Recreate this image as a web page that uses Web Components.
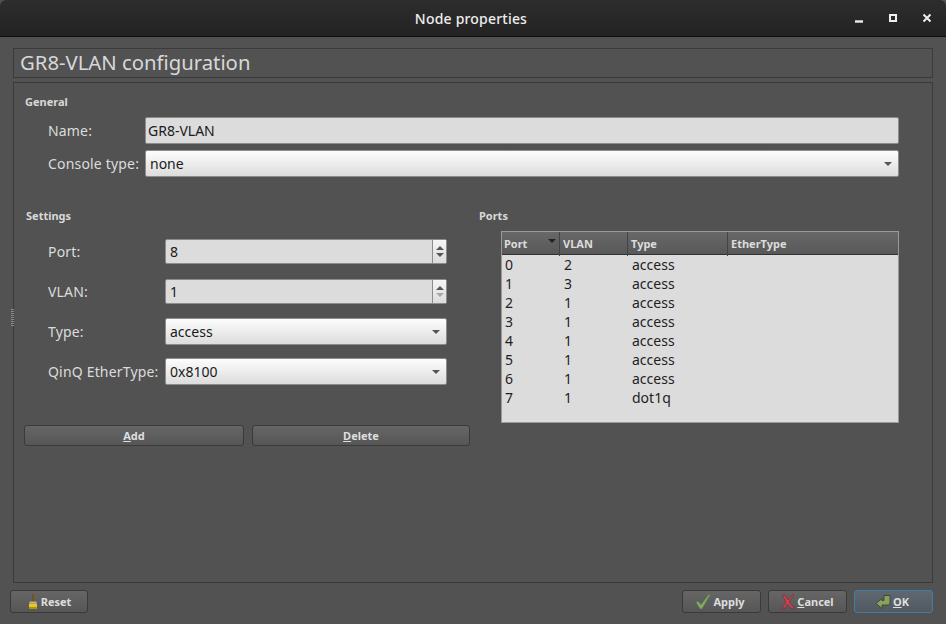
<!DOCTYPE html>
<html>
<head>
<meta charset="utf-8">
<title>Node properties</title>
<style>
  html, body { margin: 0; height: 100%; background: #525252; }
  body { font: 14px "Noto Sans", sans-serif; color: #e6e6e6; overflow: hidden; }
</style>
</head>
<body>
<node-dialog>
  <span slot="title">Node properties</span>
  <span slot="heading">GR8-VLAN configuration</span>

  <group-title style="margin:11px 0 0 1px">General</group-title>
  <form-row label="Name:" label-width="97" style="margin:7px 0 0 24px;width:851px"><text-field value="GR8-VLAN"></text-field></form-row>
  <form-row label="Console type:" label-width="97" style="margin:6px 0 0 24px;width:851px"><combo-box value="none"></combo-box></form-row>

  <two-columns>
    <div slot="left">
      <group-title style="margin-left:2px">Settings</group-title>
      <form-row label="Port:" label-width="117" style="margin:15px 0 0 24px;width:399px"><spin-box value="8"></spin-box></form-row>
      <form-row label="VLAN:" label-width="117" style="margin:15px 0 0 24px;width:399px"><spin-box value="1" at-min></spin-box></form-row>
      <form-row label="Type:" label-width="117" style="margin:14px 0 0 24px;width:399px"><combo-box value="access"></combo-box></form-row>
      <form-row label="QinQ EtherType:" label-width="117" style="margin:13px 0 0 24px;width:399px"><combo-box value="0x8100"></combo-box></form-row>
      <action-row>
        <qt-button flat-height style="width:220px"><u>A</u>dd</qt-button>
        <qt-button flat-height style="width:218px"><u>D</u>elete</qt-button>
      </action-row>
    </div>
    <div slot="right">
      <group-title>Ports</group-title>
      <port-table></port-table>
    </div>
  </two-columns>

  <qt-button slot="reset" style="width:78px"><svg slot="icon" width="12" height="17" viewBox="0 0 12 17"><path d="M5 1h2v8H5z" fill="#7a4f1e"/><path d="M2.500 8.500h7v2h-7z" fill="#b9b2a0"/><path d="M2 10.500h8V16H2z" fill="#e6c81e"/><path d="M2 14h8v2H2z" fill="#a98f14"/></svg>Reset</qt-button>
  <qt-button slot="actions" style="width:79px;padding-right:3px"><svg slot="icon" width="16" height="17" viewBox="0 0 16 17"><path d="M1 9.500l2-1.500 3 3.500L14 1l1.500.5L7 16H5z" fill="#86a868" stroke="#56703f" stroke-width=".7"/></svg>Apply</qt-button>
  <qt-button slot="actions" style="width:79px"><svg slot="icon" width="14" height="17" viewBox="0 0 14 17"><path d="M1 2h3l3 5 4.500-5.500L13 2 8 9l5 6-2 1-4.500-5L3 16H1l4-7z" fill="#cc4452" stroke="#7d2a32" stroke-width=".7"/></svg><u>C</u>ancel</qt-button>
  <qt-button slot="actions" default style="width:79px;padding-right:3px"><svg slot="icon" width="16" height="17" viewBox="0 0 16 17"><path d="M1 10.500l6-5v2h2V2.500h6v7.500q0 2-2 2H7v3.500z" fill="#8d9e62" stroke="#3c4628" stroke-width=".9"/></svg><u>O</u>K</qt-button>
</node-dialog>

<script>
class NodeDialog extends HTMLElement {
  connectedCallback() {
    this.attachShadow({ mode: 'open' });
    this.shadowRoot.innerHTML = `
      <style>
        :host { display: flex; flex-direction: column; width: 946px; height: 624px; position: relative; background: #525252; }
        .titlebar { height: 36px; flex: none; display: grid; grid-template-columns: 1fr auto 1fr; align-items: center;
          background: linear-gradient(#2d2d2d, #232323); border-bottom: 1px solid #0f0f0f; border-radius: 6px 6px 0 0; }
        .titlebar .name { grid-column: 2; font-weight: 500; font-size: 14px; letter-spacing: .2px; color: #eee; padding-right: 4px; }
        .controls { grid-column: 3; justify-self: end; display: flex; gap: 20px; padding-right: 12px; }
        .controls svg { display: block; }
        .content { flex: 1; display: flex; flex-direction: column; padding: 11px 13px 11px 13px; min-height: 0; }
        .heading { height: 28px; flex: none; border: 1px solid #3b3b3b; padding-left: 6px;
          font-size: 20.3px; line-height: 27px; color: #d8d8d8; }
        .frame { flex: 1; margin-top: 4px; border: 1px solid #3b3b3b; padding-left: 10px; min-height: 0; }
        .footer { display: flex; justify-content: space-between; flex: none; margin: 7px 0 0 -3px; height: 23px; }
        .footer .right { display: flex; }
        .right ::slotted(*) { margin-left: 7px; }
        .grip { position: absolute; left: 11px; top: 309px; width: 3px; height: 17px;
          background: repeating-linear-gradient(#8a8a8a 0 1px, transparent 1px 2px); }
      </style>
      <div class="titlebar">
        <span class="name"><slot name="title"></slot></span>
        <div class="controls">
          <svg width="14" height="14" viewBox="0 0 14 14"><path d="M3 9.300h8v2.400H3z" fill="#eee"/></svg>
          <svg width="14" height="14" viewBox="0 0 14 14"><path d="M4 4h6v6H4z" fill="none" stroke="#eee" stroke-width="2"/></svg>
          <svg width="14" height="14" viewBox="0 0 14 14"><path d="M3.500 3.500l7 7M10.500 3.500l-7 7" fill="none" stroke="#eee" stroke-width="2"/></svg>
        </div>
      </div>
      <div class="content">
        <div class="heading"><slot name="heading"></slot></div>
        <div class="frame"><slot></slot></div>
        <div class="footer">
          <slot name="reset"></slot>
          <div class="right"><slot name="actions"></slot></div>
        </div>
      </div>
      <div class="grip"></div>
    `;
  }
}

class GroupTitle extends HTMLElement {
  connectedCallback() {
    this.attachShadow({ mode: 'open' });
    this.shadowRoot.innerHTML = `
      <style>
        :host { display: block; font-size: 11px; font-weight: 700; line-height: 16px; color: #d9d9d9; }
      </style>
      <slot></slot>
    `;
  }
}

class FormRow extends HTMLElement {
  connectedCallback() {
    this.attachShadow({ mode: 'open' });
    const w = this.getAttribute('label-width');
    this.shadowRoot.innerHTML = `
      <style>
        :host { display: grid; align-items: center; grid-template-columns: ${w}px 1fr; }
        .label { color: #dcdcdc; white-space: nowrap; letter-spacing: .18px; }
      </style>
      <span class="label">${this.getAttribute('label')}</span>
      <slot></slot>
    `;
  }
}

class TextField extends HTMLElement {
  connectedCallback() {
    this.attachShadow({ mode: 'open' });
    this.shadowRoot.innerHTML = `
      <style>
        :host { display: block; height: 27px; box-sizing: border-box; border: 1px solid #8c8c8c; border-radius: 2px;
          background: #dcdcdc; color: #1a1a1a; padding-left: 2px; line-height: 25px; }
      </style>
      ${this.getAttribute('value')}
    `;
  }
}

class ComboBox extends HTMLElement {
  connectedCallback() {
    this.attachShadow({ mode: 'open' });
    this.shadowRoot.innerHTML = `
      <style>
        :host { display: flex; justify-content: space-between; align-items: center; height: 27px; box-sizing: border-box;
          border: 1px solid #8c8c8c; border-radius: 2px; background: linear-gradient(#fdfdfd, #dcdcdc);
          color: #1a1a1a; padding: 0 7px 0 4px; }
        i { width: 0; height: 0; border: 4px solid transparent; border-top: 4px solid #555; border-bottom: 0; margin-right: -1px; }
      </style>
      <span>${this.getAttribute('value')}</span><i></i>
    `;
  }
}

class SpinBox extends HTMLElement {
  connectedCallback() {
    this.attachShadow({ mode: 'open' });
    const down = this.hasAttribute('at-min') ? '#a8a8a8' : '#555';
    this.shadowRoot.innerHTML = `
      <style>
        :host { display: flex; height: 25px; box-sizing: border-box; border: 1px solid #8c8c8c; border-radius: 2px;
          background: #dcdcdc; color: #1a1a1a; line-height: 23px; }
        .value { flex: 1; padding-left: 4px; }
        .arrows { width: 13px; border-left: 1px solid #8c8c8c; display: flex; flex-direction: column; justify-content: center;
          align-items: center; gap: 3px; background: linear-gradient(#f4f4f4, #dcdcdc); }
        .up { border: 4px solid transparent; border-top: 0; border-bottom: 4px solid #555; }
        .down { border: 4px solid transparent; border-bottom: 0; border-top: 4px solid ${down}; }
      </style>
      <div class="value">${this.getAttribute('value')}</div>
      <div class="arrows"><i class="up"></i><i class="down"></i></div>
    `;
  }
}

class TwoColumns extends HTMLElement {
  connectedCallback() {
    this.attachShadow({ mode: 'open' });
    this.shadowRoot.innerHTML = `
      <style>
        :host { display: grid; grid-template-columns: 446px 420px; column-gap: 9px; margin-top: 31px; }
      </style>
      <slot name="left"></slot>
      <slot name="right"></slot>
    `;
  }
}

class ActionRow extends HTMLElement {
  connectedCallback() {
    this.attachShadow({ mode: 'open' });
    this.shadowRoot.innerHTML = `
      <style>
        :host { display: flex; gap: 8px; margin-top: 40px; }
      </style>
      <slot></slot>
    `;
  }
}

class QtButton extends HTMLElement {
  connectedCallback() {
    this.attachShadow({ mode: 'open' });
    const isDefault = this.hasAttribute('default');
    const h = this.hasAttribute('flat-height') ? 21 : 23;
    this.shadowRoot.innerHTML = `
      <style>
        :host { display: flex; justify-content: center; align-items: center; gap: 2px; height: ${h}px; box-sizing: border-box;
          border: 1px solid ${isDefault ? '#3f7ea6' : '#3a3a3a'}; border-radius: 3px;
          background: ${isDefault ? 'linear-gradient(#5f6870, #515a62)' : 'linear-gradient(#666, #565656)'};
          font-size: 11px; font-weight: 700; color: #dedede; flex: none; }
        ::slotted(svg) { display: block; }
      </style>
      <slot name="icon"></slot><span><slot></slot></span>
    `;
  }
}

class PortTable extends HTMLElement {
  connectedCallback() {
    this.attachShadow({ mode: 'open' });
    const rows = [
      ['0', '2', 'access'], ['1', '3', 'access'], ['2', '1', 'access'], ['3', '1', 'access'],
      ['4', '1', 'access'], ['5', '1', 'access'], ['6', '1', 'access'], ['7', '1', 'dot1q']
    ];
    this.shadowRoot.innerHTML = `
      <style>
        :host { display: block; width: 398px; height: 192px; box-sizing: border-box; margin: 7px 0 0 22px;
          border: 1px solid #9a9a9a; background: #dcdcdc; color: #1f1f1f; }
        .head, .row { display: grid; grid-template-columns: 58px 68px 100px 1fr; }
        .head { height: 22px; background: linear-gradient(#686868, #585858); border-bottom: 1px solid #333;
          font-size: 11px; font-weight: 700; color: #dcdcdc; line-height: 24px; }
        .head span { border-right: 1px solid #444; padding-left: 3px; position: relative; }
        .head span:first-child { padding-left: 2px; }
        .head span:last-child { border-right: 0; }
        .sort { position: absolute; right: 3px; top: 7px; border: 4px solid transparent; border-bottom: 0; border-top: 4px solid #222; }
        .row { height: 19px; line-height: 19px; }
        .row span { padding-left: 4px; }
        .row span:first-child { padding-left: 3px; }
      </style>
      <div class="head"><span>Port<i class="sort"></i></span><span>VLAN</span><span>Type</span><span>EtherType</span></div>
      <div class="body">
        ${rows.map(r => `<div class="row"><span>${r[0]}</span><span>${r[1]}</span><span>${r[2]}</span><span></span></div>`).join('')}
      </div>
    `;
  }
}

customElements.define('node-dialog', NodeDialog);
customElements.define('group-title', GroupTitle);
customElements.define('form-row', FormRow);
customElements.define('text-field', TextField);
customElements.define('combo-box', ComboBox);
customElements.define('spin-box', SpinBox);
customElements.define('two-columns', TwoColumns);
customElements.define('action-row', ActionRow);
customElements.define('qt-button', QtButton);
customElements.define('port-table', PortTable);
</script>
</body>
</html>
